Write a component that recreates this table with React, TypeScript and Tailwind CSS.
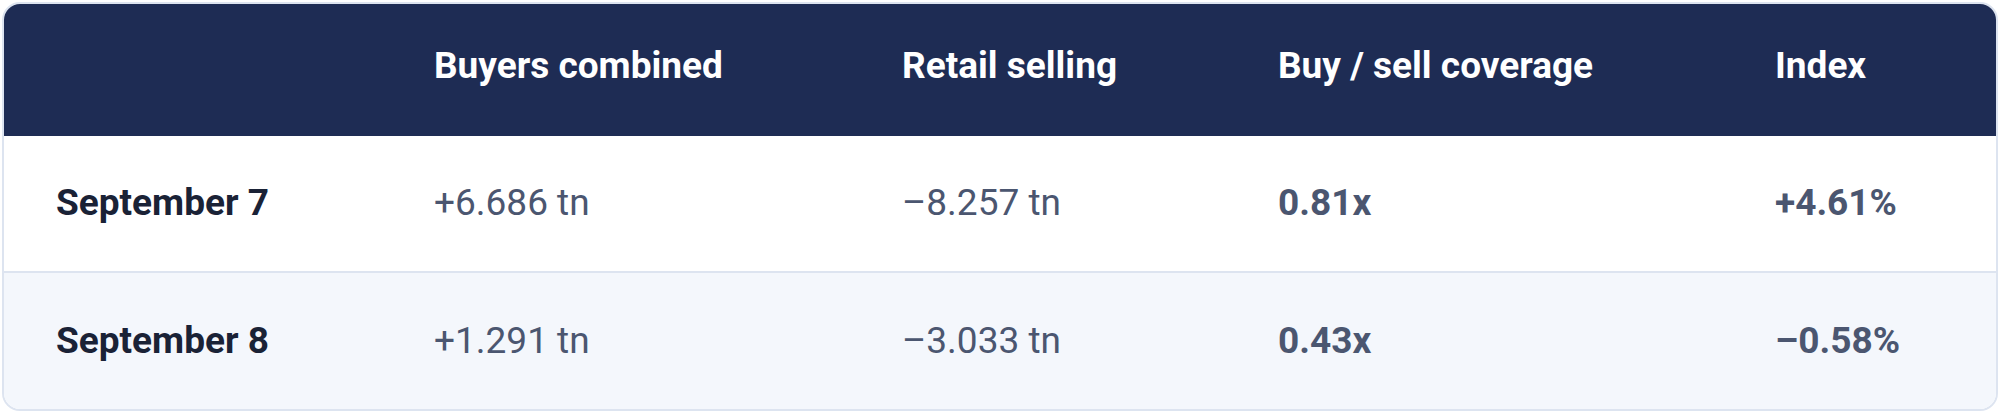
const rows = [
  { date: "September 7", buyers: "+6.686 tn", retail: "\u20138.257 tn", cover: "0.81x", index: "+4.61%" },
  { date: "September 8", buyers: "+1.291 tn", retail: "\u20133.033 tn", cover: "0.43x", index: "\u20130.58%" },
];

const cols = "grid grid-cols-[379px_468px_376px_497px_1fr]";

export default function App() {
  return (
    <div className="w-[2000px] h-[412px] bg-white p-[2px] font-['Roboto','Noto_Sans_CJK_KR',sans-serif]">
      <div className="h-[409px] overflow-hidden rounded-[18px] border-2 border-[#dde4f0]">
        <div className={`${cols} h-[134px] items-center bg-[#1e2c54] text-[37px] font-bold leading-none text-white -mx-[2px] -mt-[2px] pb-[7px]`}>
          <div />
          <div className="pl-[53px]">Buyers combined</div>
          <div className="pl-[53px]">Retail selling</div>
          <div className="pl-[53px]">Buy / sell coverage</div>
          <div className="pl-[53px]">Index</div>
        </div>
        {rows.map((r, i) => (
          <div
            key={r.date}
            className={`${cols} h-[137px] items-center text-[37px] leading-none -ml-[2px] pb-[3px] ${
              i === 0 ? "bg-white border-b-2 border-[#dde4f0]" : "bg-[#f4f7fc]"
            }`}
          >
            <div className="pl-[54px] font-bold text-[#1a2236]">{r.date}</div>
            <div className="pl-[53px] font-normal text-[#4b5670]">{r.buyers}</div>
            <div className="pl-[53px] font-normal text-[#4b5670]">{r.retail}</div>
            <div className="pl-[53px] font-bold text-[#4b5670]">{r.cover}</div>
            <div className="pl-[53px] font-bold text-[#4b5670]">{r.index}</div>
          </div>
        ))}
      </div>
    </div>
  );
}
